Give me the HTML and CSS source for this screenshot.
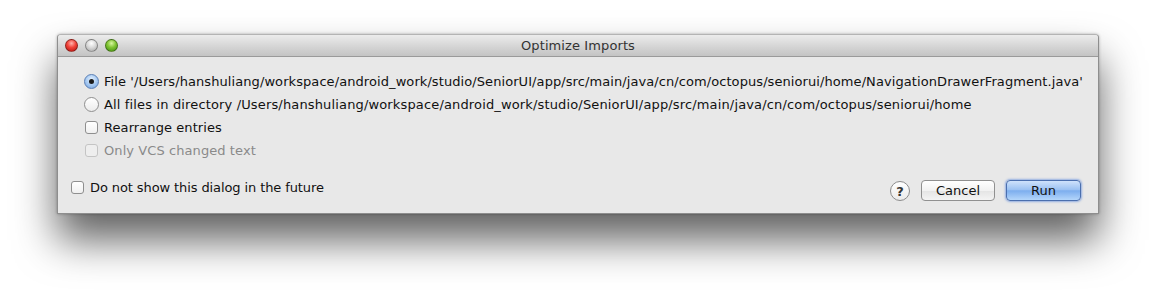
FILE: index.html
```html
<!DOCTYPE html>
<html>
<head>
<meta charset="utf-8">
<link rel="stylesheet" href="styles.css">
</head>
<body>
<div class="window">
  <div class="titlebar">
    <div class="lights">
      <span class="light red"></span>
      <span class="light gray"></span>
      <span class="light green"></span>
    </div>
    <div class="title">Optimize Imports</div>
  </div>
  <div class="content">
    <div class="options">
      <label class="row"><span class="radio checked"><span class="dot"></span></span><span class="text">File '/Users/hanshuliang/workspace/android_work/studio/SeniorUI/app/src/main/java/cn/com/octopus/seniorui/home/NavigationDrawerFragment.java'</span></label>
      <label class="row"><span class="radio"></span><span class="text">All files in directory /Users/hanshuliang/workspace/android_work/studio/SeniorUI/app/src/main/java/cn/com/octopus/seniorui/home</span></label>
      <label class="row"><span class="check"></span><span class="text">Rearrange entries</span></label>
      <label class="row disabled"><span class="check"></span><span class="text">Only VCS changed text</span></label>
    </div>
    <div class="footer">
      <label class="row"><span class="check"></span><span class="text">Do not show this dialog in the future</span></label>
      <div class="buttons">
        <span class="help">?</span>
        <button class="btn cancel">Cancel</button>
        <button class="btn run">Run</button>
      </div>
    </div>
  </div>
</div>
</body>
</html>
```
FILE: styles.css
```css
html, body {
  margin: 0;
  padding: 0;
  background: #ffffff;
}
body {
  width: 1156px;
  height: 293px;
  overflow: hidden;
  padding: 34px 0 0 57px;
  box-sizing: border-box;
  font-family: "DejaVu Sans", "Liberation Sans", sans-serif;
}
.window {
  width: 1042px;
  height: 180px;
  box-sizing: border-box;
  border: 1px solid #8e8e8e;
  border-top-color: #b4b4b4;
  border-radius: 4px 4px 0 0;
  background: #e8e8e8;
  box-shadow: 0 26px 42px rgba(0, 0, 0, 0.62), 0 0 3px rgba(0,0,0,0.3);
  display: flex;
  flex-direction: column;
}
.titlebar {
  height: 21px;
  border-bottom: 1px solid #9a9a9a;
  background: linear-gradient(#ececec, #d3d3d3 60%, #c4c4c4);
  border-radius: 3px 3px 0 0;
  display: flex;
  align-items: center;
  position: relative;
}
.lights {
  display: flex;
  gap: 7px;
  padding-left: 7px;
}
.light {
  width: 13px;
  height: 13px;
  border-radius: 50%;
  box-sizing: border-box;
  border: 1px solid rgba(0,0,0,0.35);
}
.light.red {
  background: radial-gradient(circle at 50% 30%, #ffb3ad 0, #f2443a 45%, #b3100c 100%);
}
.light.gray {
  background: radial-gradient(circle at 50% 30%, #ffffff 0, #dadada 45%, #a4a4a4 100%);
}
.light.green {
  background: radial-gradient(circle at 50% 30%, #d8f5a0 0, #80c532 45%, #3f8a10 100%);
}
.title {
  position: absolute;
  left: 0;
  right: 0;
  text-align: center;
  font-size: 13px;
  letter-spacing: 0.1px;
  color: #333;
  top: 3px;
}
.content {
  flex: 1;
  display: flex;
  flex-direction: column;
  padding: 15px 0 0 25px;
}
.options {
  display: flex;
  flex-direction: column;
  gap: 5px;
}
.row {
  display: flex;
  align-items: center;
  height: 18px;
  font-size: 13px;
  letter-spacing: 0.08px;
  color: #111;
  gap: 5px;
}
.row.disabled {
  color: #8a8a8a;
}
.options .row:nth-child(2) {
  letter-spacing: 0.15px;
}
.radio {
  width: 15px;
  height: 15px;
  border-radius: 50%;
  box-sizing: border-box;
  border: 1px solid #8f8f8f;
  background: linear-gradient(#ffffff, #ececec);
  display: flex;
  align-items: center;
  justify-content: center;
  flex: none;
  margin-left: 1px;
}
.radio.checked {
  border-color: #5a7fb5;
  background: radial-gradient(circle at 50% 35%, #e6f2ff 0, #a9cbf2 50%, #6f9edc 100%);
}
.dot {
  width: 5px;
  height: 5px;
  border-radius: 50%;
  background: #1b1b1b;
}
.check {
  width: 13px;
  height: 13px;
  box-sizing: border-box;
  border: 1px solid #8f8f8f;
  border-radius: 3px;
  background: linear-gradient(#ffffff, #f0f0f0);
  flex: none;
  margin: 0 1px 0 2px;
}
.disabled .check {
  border-color: #c4c4c4;
  background: #eeeeee;
}
.footer {
  display: flex;
  align-items: center;
  justify-content: space-between;
  margin-top: 20px;
  margin-left: -14px;
  padding-right: 17px;
}
.footer .row {
  margin-top: -5px;
  letter-spacing: -0.1px;
}
.buttons {
  display: flex;
  align-items: center;
}
.help {
  width: 20px;
  height: 20px;
  box-sizing: border-box;
  border-radius: 50%;
  border: 1px solid #8c8c8c;
  background: linear-gradient(#ffffff, #ebebeb);
  font-size: 13px;
  font-weight: bold;
  color: #333;
  display: flex;
  align-items: center;
  justify-content: center;
  margin-right: 11px;
  margin-top: 2px;
}
.btn {
  font-family: "DejaVu Sans", "Liberation Sans", sans-serif;
  font-size: 13px;
  height: 21px;
  width: 74px;
  border-radius: 4px;
  padding: 0;
  color: #111;
}
.cancel {
  border: 1px solid #909090;
  background: linear-gradient(#ffffff, #f2f2f2 50%, #e4e4e4 51%, #f4f4f4);
  margin-right: 11px;
}
.run {
  width: 75px;
  border: 1px solid #4b6fae;
  background: linear-gradient(#cfe2fb, #9cc2f2 45%, #7daeee 52%, #b4d6fb);
  box-shadow: 0 0 2px 1px rgba(80,130,220,0.55);
}
```
